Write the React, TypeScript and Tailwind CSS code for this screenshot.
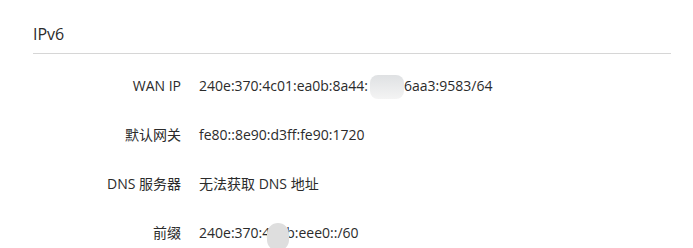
const rows = [
  { label: 'WAN IP', value: 'wan' },
  { label: '默认网关', value: 'fe80::8e90:d3ff:fe90:1720' },
  { label: 'DNS 服务器', value: '无法获取 DNS 地址' },
  { label: '前缀', value: 'prefix' },
];

function Value({ value }: { value: string }) {
  if (value === 'wan') {
    return (
      <span className="relative">
        240e:370:4c01:ea0b:8a44:
        <span className="relative inline-block w-[36px] align-middle">
          <span className="absolute left-[2px] top-[-12px] w-[34px] h-[24px] rounded-[8px] bg-gradient-to-b from-[#dfe1e3] to-[#f4f4f4]" />
        </span>
        6aa3:9583/64
      </span>
    );
  }
  if (value === 'prefix') {
    return (
      <span className="relative">
        240e:370:4
        <span className="relative inline-block w-[16px] align-middle">
          <span className="absolute left-[-3px] top-[-11px] w-[22px] h-[28px] rounded-full bg-[#dedede]" />
        </span>
        b:eee0::/60
      </span>
    );
  }
  return <span>{value}</span>;
}

export default function App() {
  return (
    <div
      className="w-[693px] h-[248px] bg-white overflow-hidden pt-[24px] pl-[33px] pr-[22px] text-[#2b2b2b]"
      style={{ fontFamily: '"Open Sans", "Noto Sans CJK SC", sans-serif' }}
    >
      <div className="text-[16px] leading-[20px] pb-[9px] border-b border-[#d6d6d6]">IPv6</div>
      <div className="pt-[21px] flex flex-col gap-[29px] text-[14px]">
        {rows.map((r) => (
          <div key={r.label} className="flex items-center h-[20px]">
            <div className="w-[148px] text-right">{r.label}</div>
            <div className="pl-[18px]">
              <Value value={r.value} />
            </div>
          </div>
        ))}
      </div>
    </div>
  );
}
